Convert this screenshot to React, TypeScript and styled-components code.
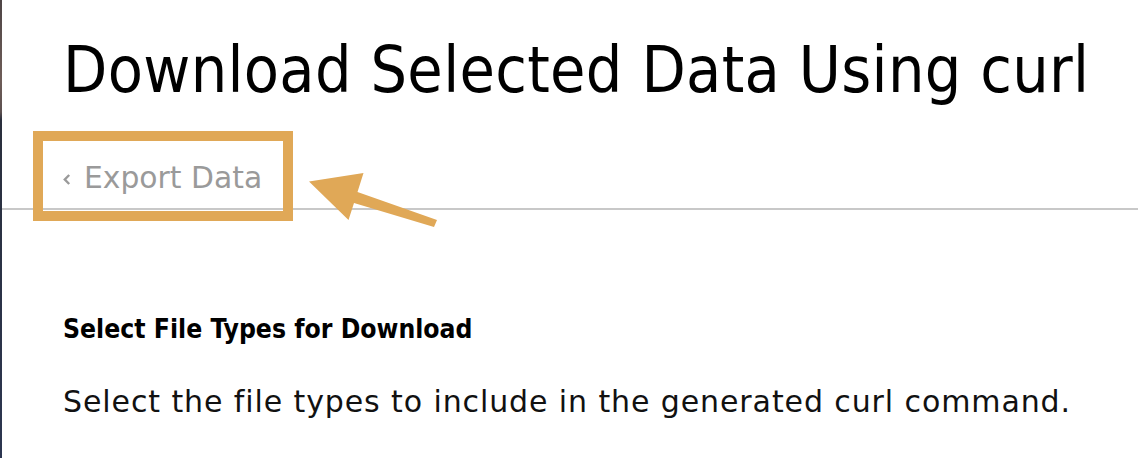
import React from "react";
import styled, { createGlobalStyle } from "styled-components";

const GlobalStyle = createGlobalStyle`
  html, body { margin: 0; padding: 0; background: #ffffff; }
  body { font-family: "DejaVu Sans", sans-serif; }
`;

const Page = styled.div`
  position: relative;
  display: flex;
  width: 1138px;
  height: 458px;
  overflow: hidden;
  background: #ffffff;
`;

const EdgeStrip = styled.div`
  width: 2px;
  flex: none;
  background: linear-gradient(
    to bottom,
    #4e4546 0px,
    #6e5d58 80px,
    #5d5050 112px,
    #2a2f3d 120px,
    #2c3650 458px
  );
`;

const Main = styled.main`
  flex: 1;
  display: flex;
  flex-direction: column;
`;

const Title = styled.h1`
  margin: 0;
  padding: 33px 0 0 61px;
  font-family: "DejaVu Sans Condensed", "DejaVu Sans", sans-serif;
  font-weight: 400;
  font-size: 64px;
  line-height: 75px;
  letter-spacing: 0.33px;
  color: #000000;
  white-space: nowrap;
`;

const NavBar = styled.nav`
  margin-top: 52px;
  padding: 0 0 13px 61px;
  border-bottom: 2px solid #c8c8c8;
`;

const BackLink = styled.a`
  display: inline-flex;
  align-items: center;
  gap: 13px;
  font-family: "DejaVu Sans", sans-serif;
  font-size: 29.8px;
  line-height: 35px;
  color: #9a9a9a;
  text-decoration: none;
  cursor: pointer;
`;

const Chevron = styled.svg`
  width: 8px;
  height: 15px;
  flex: none;
  margin-top: 3px;
`;

const Section = styled.section`
  padding: 104px 0 0 61px;
`;

const SectionHeading = styled.h2`
  margin: 0;
  font-family: "DejaVu Sans Condensed", "DejaVu Sans", sans-serif;
  font-weight: 700;
  font-size: 26.3px;
  line-height: 30px;
  color: #000000;
`;

const SectionText = styled.p`
  margin: 39.5px 0 0;
  font-family: "DejaVu Sans", sans-serif;
  font-size: 30px;
  line-height: 35px;
  letter-spacing: 0.9px;
  color: #111111;
  white-space: nowrap;
`;

const HighlightBox = styled.div`
  position: absolute;
  left: 33px;
  top: 131px;
  width: 260px;
  height: 90px;
  box-sizing: border-box;
  border: 10px solid #e0a857;
  pointer-events: none;
`;

const PointerArrow = styled.svg`
  position: absolute;
  left: 300px;
  top: 165px;
  width: 145px;
  height: 70px;
  pointer-events: none;
`;

export default function App() {
  return (
    <>
      <GlobalStyle />
      <Page>
        <EdgeStrip />
        <Main>
          <Title>Download Selected Data Using curl</Title>
          <NavBar>
            <BackLink>
              <Chevron viewBox="0 0 8 15">
                <polyline
                  points="6.2,3 1.8,7.5 6.2,12"
                  fill="none"
                  stroke="#9a9a9a"
                  strokeWidth="2.4"
                  strokeLinecap="butt"
                  strokeLinejoin="miter"
                />
              </Chevron>
              Export Data
            </BackLink>
          </NavBar>
          <Section>
            <SectionHeading>Select File Types for Download</SectionHeading>
            <SectionText>
              Select the file types to include in the generated curl command.
            </SectionText>
          </Section>
        </Main>
        <HighlightBox />
        <PointerArrow viewBox="300 165 145 70">
          <polygon
            points="309,181.5 363.5,173 357.5,192 437,220 434,227 354,203 348.5,220"
            fill="#e0a857"
          />
        </PointerArrow>
      </Page>
    </>
  );
}
